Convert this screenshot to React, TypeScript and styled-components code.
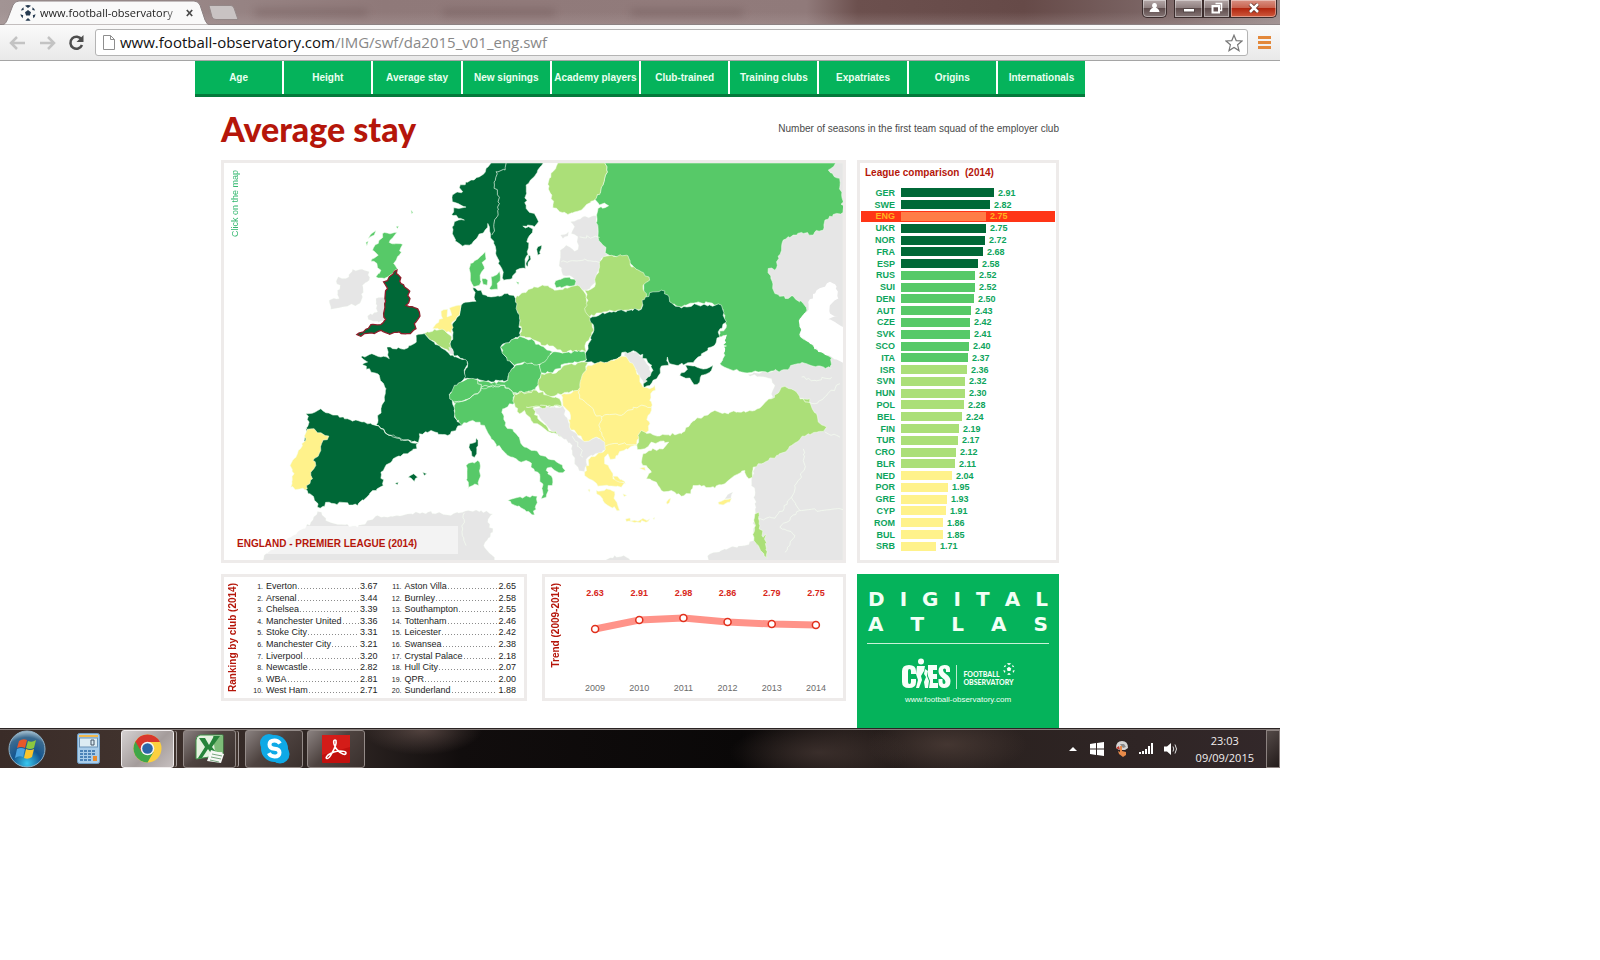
import React from "react";
import styled, { createGlobalStyle } from "styled-components";

const sans = `"Liberation Sans", Arial, sans-serif`;
const ui = `"Open Sans", "Segoe UI", sans-serif`;
const red = "#b5160a";
const green = "#05b35b";

const Global = createGlobalStyle`
  * { box-sizing: border-box; }
  body { margin: 0; background: #fff; font-family: ${sans}; }
  button, input { font: inherit; color: inherit; border: 0; padding: 0; margin: 0; background: none; }
  a { color: inherit; text-decoration: none; }
  svg { display: block; flex: none; }
`;

/* ---------- browser window ---------- */

const Desktop = styled.div`
  width: 80%;
  min-width: 900px;
`;

const TabStrip = styled.div`
  display: flex;
  align-items: flex-end;
  height: 25px;
  border-bottom: 1px solid #8d8283;
  background:
    linear-gradient(to bottom, rgba(255, 255, 255, 0) 50%, rgba(190, 175, 175, 0.25)),
    linear-gradient(to right, #a29494, #8f7979 30%, #917b7b 52%, #907a7a 63%, #6c504e 67%, #664a48 80%, #806b6b 92%, #9a8c8c);
`;

const ActiveTab = styled.div`
  position: relative;
  display: flex;
  align-items: center;
  width: 208px;
  height: 24px;
  padding: 2px 15px 0 20px;
  font-family: ${ui};
  font-size: 11px;
  color: #222;
`;

const TabShape = styled.svg`
  position: absolute;
  inset: 0;
  z-index: 0;
`;

const TabLabel = styled.span`
  position: relative;
  flex: 1;
  margin-left: 4px;
  white-space: nowrap;
  line-height: 16px;
  -webkit-mask-image: linear-gradient(to right, #000 90%, rgba(0, 0, 0, 0.3));
  mask-image: linear-gradient(to right, #000 90%, rgba(0, 0, 0, 0.3));
`;

const TabIcon = styled.svg`
  position: relative;
`;

const TabClose = styled.button`
  position: relative;
  margin: 0 0 0 8px;
`;

const NewTab = styled.button`
  align-self: center;
`;

const GhostTabs = styled.div`
  display: flex;
  align-self: stretch;
  align-items: center;
  flex: 1;
  gap: 76px;
  padding-left: 16px;
  overflow: hidden;
`;

const Ghost = styled.span`
  width: 112px;
  height: 5px;
  background: #6e5656;
  opacity: 0.6;
  filter: blur(4px);
`;

const WindowButtons = styled.div`
  display: flex;
  align-self: flex-start;
  margin-right: 3px;
`;

const WindowButton = styled.button<{ $w: number; $kind?: "close" | "user" }>`
  display: flex;
  align-items: center;
  justify-content: center;
  width: ${(p) => p.$w}px;
  height: 18px;
  padding-bottom: 2px;
  margin-right: ${(p) => (p.$kind === "user" ? 7 : 0)}px;
  border: 1px solid #3b2c2c;
  border-top: 0;
  border-radius: ${(p) => (p.$kind === "close" ? "0 0 5px 0" : p.$kind === "user" ? "0 0 5px 5px" : "0")};
  box-shadow: inset 0 0 0 1px rgba(255, 255, 255, 0.4);
  background: ${(p) =>
    p.$kind === "close"
      ? "linear-gradient(#d99183, #c96450 45%, #b2260f 50%, #cf5a3d)"
      : "linear-gradient(#b5a8a8, #8f8080 45%, #5f4d4d 50%, #857575)"};
`;

const Toolbar = styled.div`
  display: flex;
  align-items: center;
  height: 36px;
  padding: 0 9px;
  border-bottom: 1px solid #a5a5a5;
  background: linear-gradient(#fafafa, #e9e9e9);
`;

const ToolButton = styled.button<{ $gap: number }>`
  margin-right: ${(p) => p.$gap}px;
`;

const Omnibox = styled.div`
  position: relative;
  display: flex;
  align-items: center;
  flex: 1;
  height: 27px;
  margin-right: 10px;
  padding: 0 4px 0 7px;
  border: 1px solid #b4b4b4;
  border-radius: 3px;
  background: #fff;
  font-family: ${ui};
  font-size: 15px;
  line-height: 24px;
`;

const Address = styled.a`
  flex: 1;
  margin-left: 5px;
  padding-bottom: 2px;
  color: #888;
  b { font-weight: 400; color: #111; }
`;

/* ---------- page ---------- */

const Site = styled.main`
  background: #fff;
`;

const Nav = styled.nav`
  display: flex;
  gap: 2px;
  width: 70%;
  max-width: 890px;
  min-width: 860px;
  height: 36px;
  margin: 0 auto;
  border-bottom: 3px solid #047a3c;
`;

const NavLink = styled.a`
  flex: 1;
  display: flex;
  align-items: center;
  justify-content: center;
  background: ${green};
  color: #eafff0;
  font-size: 10px;
  line-height: 12px;
  font-weight: 700;
  white-space: nowrap;
`;

const Content = styled.div`
  width: 66%;
  max-width: 838px;
  min-width: 820px;
  margin: 0 auto;
`;

const Heading = styled.header`
  display: flex;
  align-items: center;
  justify-content: space-between;
  height: 63px;
`;

const Title = styled.h1`
  margin: 0;
  font-family: Lato, ${sans};
  font-size: 34px;
  line-height: 40px;
  font-weight: 900;
  color: ${red};
`;

const Subtitle = styled.p`
  margin: 0;
  font-size: 10px;
  line-height: 12px;
  color: #4a4a4a;
`;

const Grid = styled.div`
  display: grid;
  grid-template-columns: 625fr 202fr;
  gap: 11px;
`;

const Panel = styled.section`
  position: relative;
  border: 3px solid #eeebea;
  background: #fff;
`;

const SideLabel = styled.h2<{ $strong?: boolean }>`
  align-self: flex-start;
  margin: ${(p) => (p.$strong ? "3px 0 0" : "0")};
  writing-mode: vertical-rl;
  transform: rotate(180deg);
  white-space: nowrap;
  font-size: ${(p) => (p.$strong ? 10 : 9)}px;
  line-height: 12px;
  font-weight: ${(p) => (p.$strong ? 700 : 400)};
  color: ${(p) => (p.$strong ? red : "#35b870")};
`;

const MapHint = styled.div`
  position: absolute;
  top: 7px;
  left: 5px;
`;

const MapCaption = styled.div`
  position: absolute;
  left: 4px;
  bottom: 6px;
  width: 230px;
  padding: 12px 9px 4px;
  background: rgba(255, 255, 255, 0.5);
  font-size: 10px;
  line-height: 12px;
  font-weight: 700;
  color: ${red};
`;

const MapSvg = styled.svg`
  width: 100%;
  height: auto;
`;

const LeaguePanel = styled(Panel)`
  display: flex;
  flex-direction: column;
  padding: 4px 1px 8px;
`;

const PanelTitle = styled.h2`
  margin: 0 0 8px 4px;
  font-size: 10px;
  line-height: 12px;
  font-weight: 700;
  color: ${red};
  white-space: pre;
`;

const LeagueTable = styled.table`
  display: flex;
  flex: 1;
  tbody { display: flex; flex: 1; flex-direction: column; }
`;

const LeagueRow = styled.tr<{ $on: boolean }>`
  display: flex;
  flex: 1;
  align-items: center;
  background: ${(p) => (p.$on ? "#ff3516" : "none")};
  color: ${(p) => (p.$on ? "#ffb31f" : "#0da45c")};
  font-size: 9px;
  line-height: 10px;
  font-weight: 700;
  th { width: 34px; padding: 0; text-align: right; }
  td { display: flex; align-items: center; gap: 4px; padding: 0 0 0 6px; }
`;

const Bar = styled.span<{ $tone: string }>`
  height: 9px;
  background: ${(p) => p.$tone};
`;

const LowerRow = styled.div`
  display: grid;
  grid-template-columns: 306fr 304fr;
  gap: 15px;
  height: 127px;
`;

const RankingPanel = styled(Panel)`
  display: flex;
  padding: 3px 8px 3px 3px;
`;

const RankingTable = styled.table`
  display: flex;
  flex: 1;
  margin-left: 12px;
  tbody { display: flex; flex: 1; flex-direction: column; justify-content: space-between; }
`;

const RankingRow = styled.tr`
  display: flex;
  align-items: baseline;
  height: 11px;
  font-size: 9px;
  line-height: 11px;
  color: #1d1d1d;
  td { padding: 0; white-space: nowrap; }
  td:first-child { width: 12px; margin-right: 3px; font-size: 7px; text-align: right; }
`;

const Leader = styled.td`
  flex: 1;
  height: 9px;
  margin: 0 1px;
  background: repeating-linear-gradient(to right, #8b8b8b 0 1px, transparent 1px 3px) left bottom / 100% 1px no-repeat;
`;

const TrendPanel = styled(Panel)`
  display: flex;
  padding: 3px 5px 4px;
`;

const TrendChart = styled.div`
  flex: 1;
  display: flex;
  flex-direction: column;
  justify-content: space-between;
  padding-left: 11px;
`;

const TrendScale = styled.div<{ $strong?: boolean }>`
  display: flex;
  padding-top: ${(p) => (p.$strong ? 8 : 0)}px;
  font-size: 9px;
  line-height: 11px;
  font-weight: ${(p) => (p.$strong ? 700 : 400)};
  color: ${(p) => (p.$strong ? "#d8261a" : "#6b6b6b")};
  span { flex: 1; text-align: center; }
`;

const TrendLine = styled.svg`
  width: 100%;
  height: auto;
`;

const Brand = styled.aside`
  display: flex;
  flex-direction: column;
  height: 154px;
  padding: 13px 10px;
  background: ${green};
  color: #f2fff6;
`;

const Wordmark = styled.div`
  display: flex;
  justify-content: space-between;
  padding: 0 1px;
  font-family: "DejaVu Sans", sans-serif;
  font-size: 20px;
  line-height: 25px;
  font-weight: 700;
`;

const BrandRule = styled.hr`
  width: 100%;
  height: 1px;
  margin: 6px 0 14px;
  border: 0;
  background: #c9f2d8;
`;

const BrandRow = styled.div`
  display: flex;
  align-items: flex-end;
  justify-content: center;
  gap: 5px;
`;

const Cies = styled.strong`
  position: relative;
  display: flex;
  align-items: flex-end;
`;

const Observatory = styled.div`
  position: relative;
  padding: 5px 0 3px 6px;
  border-left: 1px solid #bdebcf;
  font-family: Lato, ${sans};
  font-size: 7px;
  line-height: 8px;
  font-weight: 900;
`;

const ObservatoryBall = styled.svg`
  position: absolute;
  right: -1px;
  top: -2px;
`;

const SiteLink = styled.a`
  margin-top: 5px;
  text-align: center;
  font-size: 8px;
  line-height: 12px;
`;

/* ---------- taskbar ---------- */

const Taskbar = styled.footer`
  display: flex;
  align-items: center;
  height: 40px;
  border-top: 1px solid #2b2424;
  box-shadow: inset 0 1px 0 #857c7a;
  background:
    radial-gradient(ellipse 60px 26px at 33% 0, rgba(120, 98, 92, 0.6), transparent),
    radial-gradient(ellipse 90px 30px at 64% 60%, rgba(70, 56, 52, 0.7), transparent),
    radial-gradient(ellipse 80px 30px at 74% 40%, rgba(80, 64, 58, 0.7), transparent),
    linear-gradient(to right, #3a2c28, #40322d 10%, #2a2220 28%, #110d0d 36%, #0a0808 58%, #231b19 66%, #2b2220 78%, #33282a 100%);
`;

const StartButton = styled.button`
  margin: 0 31px 0 8px;
`;

const PinnedButton = styled.button`
  margin-right: 21px;
`;

const TaskButton = styled.button<{ $active?: boolean; $stack?: boolean; $w: number }>`
  display: flex;
  align-items: center;
  justify-content: center;
  width: ${(p) => p.$w}px;
  height: 38px;
  margin-right: ${(p) => (p.$stack ? 9 : 4)}px;
  border: 1px solid ${(p) => (p.$active ? "#f0ecec" : "#948b88")};
  border-radius: 3px;
  box-shadow: ${(p) => (p.$stack ? "3px 0 0 -1px #40342f, 4px 0 0 -1px #a69d9b" : "none")};
  background: ${(p) =>
    p.$active
      ? "linear-gradient(135deg, #d5d1d1, #a49c9b 55%, #c6bfbf)"
      : "linear-gradient(135deg, #8a8180, #4e4340 45%, #3a302d)"};
`;

const Tray = styled.div`
  display: flex;
  align-items: center;
  flex: 1;
  justify-content: flex-end;
  gap: 10px;
`;

const Clock = styled.time`
  margin: 0 12px 0 7px;
  padding-top: 1px;
  font-family: ${ui};
  font-size: 11px;
  line-height: 17px;
  color: #f1eeee;
  text-align: center;
`;

const ShowDesktop = styled.button`
  width: 14px;
  height: 38px;
  border: 1px solid #8c8280;
  background: linear-gradient(135deg, #544a48, #231b1a);
`;

/* ---------- map geometry ---------- */

/* Small repeatable displacement that breaks straight edges into a coastline. */
const jitter = (x: number, y: number) => {
  const s = Math.sin(x * 12.9898 + y * 78.233) * 43758.5453;
  return (s - Math.floor(s) - 0.5) * 9;
};

const outline = (points: string, closed = true) => {
  const pts = points.trim().split(/\s+/).map((p) => p.split(",").map(Number));
  const out: string[] = [];
  const count = closed ? pts.length : pts.length - 1;
  for (let i = 0; i < count; i++) {
    const [x1, y1] = pts[i];
    const [x2, y2] = pts[(i + 1) % pts.length];
    out.push(`${x1},${y1}`);
    const frame = (y1 === 24 && y2 === 24) || (x1 >= 1884 && x2 >= 1884) || (y1 >= 1214 && y2 >= 1214);
    const steps = frame ? 1 : Math.floor(Math.hypot(x2 - x1, y2 - y1) / 8);
    for (let k = 1; k < steps; k++) {
      const x = x1 + ((x2 - x1) * k) / steps;
      const y = y1 + ((y2 - y1) * k) / steps;
      out.push(`${(x + jitter(x, y)).toFixed(1)},${(y + jitter(y, x)).toFixed(1)}`);
    }
  }
  if (!closed) out.push(pts[pts.length - 1].join(","));
  return `M${out.join("L")}${closed ? "Z" : ""}`;
};

const tone = { dark: "#006837", mid: "#57c968", light: "#abdf78", pale: "#fff28b", none: "#e6e6e6" };

type Land = [keyof typeof tone, string];

const lands: Land[] = [
  // Russia's neighbours, Caucasus and Middle East
  ["none", "1780,24 1884,24 1884,1220 1475,1220 1485,1195 1530,1180 1590,1170 1617,1155 1620,1020 1610,975 1620,930 1680,690 1670,670 1600,658 1700,640 1780,610 1660,430 1640,340 1700,240"],
  // North Africa
  ["none", "140,1220 150,1200 230,1145 290,1100 310,1068 322,1070 335,1095 365,1105 430,1115 490,1080 520,1085 580,1075 640,1070 700,1078 745,1070 800,1065 835,1075 820,1100 835,1130 808,1170 840,1205 840,1220"],
  ["none", "1160,1220 1200,1200 1235,1205 1250,1220"],
  // Ireland and Wales
  ["none", "372,365 395,370 415,342 450,345 465,350 465,375 445,390 445,425 430,448 385,455 350,462 345,435 375,430 370,405 378,390 366,378"],
  ["none", "485,430 512,430 512,500 470,495 460,482 490,470"],
  // Baltic states
  ["none", "1068,200 1105,185 1145,182 1150,230 1165,270 1180,298 1160,310 1155,340 1145,380 1115,405 1080,390 1078,370 1045,360 1035,320 1037,285 1055,270 1080,288 1092,270 1090,245 1070,235 1080,215"],
  ["none", "1038,240 1062,230 1060,243 1045,250"],
  // Balkans without data
  ["none", "955,758 1045,752 1065,815 1090,845 1110,858 1145,845 1172,858 1175,882 1120,905 1110,955 1080,925 1073,870 1030,838 1000,815 975,785"],
  // Moldova
  ["none", "1230,590 1265,590 1285,605 1305,635 1312,660 1290,692 1270,655 1240,615"],
  ["mid", "1170,24 1862,24 1840,45 1858,65 1874,70 1880,120 1884,172 1865,175 1830,195 1825,225 1800,230 1795,240 1760,232 1735,240 1705,255 1700,285 1685,320 1680,345 1660,340 1668,370 1680,415 1720,430 1730,422 1765,445 1776,465 1760,490 1757,545 1790,565 1820,590 1850,608 1848,640 1815,632 1755,625 1700,645 1630,650 1580,650 1535,638 1515,622 1530,600 1520,585 1535,572 1505,575 1535,540 1508,545 1535,510 1530,480 1515,450 1450,440 1400,455 1350,440 1290,430 1280,365 1240,310 1180,298 1165,270 1150,245 1146,180 1150,160 1182,152 1150,143 1140,132 1165,90 1176,45"],
  ["mid", "1020,385 1048,368 1080,372 1080,392 1025,398"],
  ["light", "1030,24 1170,24 1176,45 1165,90 1145,130 1105,160 1060,178 1015,158 1012,120 1000,88 1015,50"],
  ["dark", "830,24 986,24 970,45 948,75 935,90 935,160 945,172 965,185 972,200 960,215 925,213 955,222 940,250 938,290 933,340 905,345 893,370 868,375 862,340 845,300 838,265 828,235 820,205 812,225 790,245 765,270 745,273 722,258 714,235 720,200 750,195 712,178 718,158 755,156 714,140 714,120 745,110 735,98 770,75 800,62 815,40"],
  ["dark", "970,275 982,270 978,295 970,300"],
  ["dark", "942,300 947,302 940,335 935,330"],
  // Denmark
  ["mid", "768,325 790,312 812,290 815,312 803,322 810,340 797,360 795,390 778,395 768,370"],
  ["mid", "803,370 820,375 818,390 806,387"],
  ["mid", "830,365 848,358 855,348 858,365 848,385 850,402 825,400 832,380"],
  ["mid", "905,380 914,382 911,388"],
  ["light", "903,430 930,412 958,395 990,392 1020,405 1095,393 1115,425 1118,460 1130,490 1138,525 1115,560 1115,590 1085,585 1045,592 1015,572 980,570 960,555 918,543 915,490 903,455"],
  ["light", "1180,302 1240,302 1250,335 1280,350 1305,375 1285,390 1295,425 1280,460 1230,465 1165,470 1125,485 1110,460 1120,435 1110,405 1140,395 1145,360 1155,335 1160,315"],
  ["dark", "1125,490 1165,472 1280,462 1282,435 1315,410 1340,405 1360,420 1365,440 1400,458 1445,448 1520,450 1525,480 1535,500 1510,530 1515,545 1490,575 1450,605 1435,622 1385,630 1365,625 1358,605 1362,630 1340,632 1332,660 1315,675 1287,698 1300,665 1315,645 1295,610 1265,590 1232,590 1210,608 1180,625 1140,625 1110,620 1120,570 1138,525"],
  ["dark", "1395,660 1418,642 1412,630 1440,632 1475,640 1495,630 1490,645 1460,660 1455,680 1438,688 1425,668"],
  // Germany, Low Countries, France
  ["dark", "775,398 800,405 805,418 830,425 880,415 903,430 905,460 915,490 918,540 860,572 870,600 900,632 880,675 830,680 790,670 750,670 758,618 720,602 708,575 715,540 712,510 735,480 740,450 765,440 785,438"],
  ["pale", "655,520 685,490 680,468 700,462 698,485 712,480 705,458 740,450 735,480 714,500 712,535 690,525"],
  ["light", "630,535 660,522 690,525 712,545 705,590 680,575 650,555"],
  ["none", "703,575 714,580 717,598 704,594"],
  ["dark", "605,540 630,535 650,555 680,577 720,605 758,618 748,672 705,718 722,760 720,785 742,810 700,840 650,825 615,835 612,862 570,855 530,840 485,810 500,760 510,725 515,700 495,660 445,628 460,620 440,605 480,598 500,605 525,610 518,575 535,580 570,582 600,565"],
  // Iberia
  ["dark", "275,775 320,760 335,772 400,790 485,810 530,840 572,855 612,862 608,880 545,905 500,950 507,990 475,1005 430,1050 345,1040 318,1058 300,1030 270,1000 275,820 285,800"],
  ["pale", "275,817 300,820 310,832 344,842 322,865 315,895 297,915 305,930 290,950 295,970 272,1003 230,995 240,955 228,930 250,895 275,850"],
  ["dark", "582,965 598,955 610,965 600,978"],
  ["dark", "625,950 637,955 630,960"],
  ["dark", "542,983 552,980 550,988"],
  // Britain
  ["mid", "485,365 500,345 488,325 470,318 492,300 475,285 492,265 510,232 548,232 525,262 565,268 555,300 538,325 550,342 530,358 510,370"],
  ["mid", "468,240 485,226 480,240 462,250"],
  ["mid", "455,262 462,258 458,272"],
  ["mid", "545,215 553,213 550,220"],
  ["mid", "590,165 596,172 592,176"],
  // Central Europe and Italy
  ["mid", "705,718 720,690 760,670 790,674 830,684 880,675 892,640 930,620 975,630 980,660 970,690 955,710 900,715 860,698 800,705 790,725 740,740 722,745"],
  ["mid", "858,575 915,543 930,548 960,558 980,572 1015,590 990,622 975,627 930,620 900,630 870,600"],
  ["mid", "975,630 990,620 1015,590 1050,592 1110,588 1115,615 1050,625 1015,652 980,652"],
  ["mid", "720,760 725,740 742,738 790,715 800,698 860,690 895,710 902,742 865,760 872,810 905,835 930,875 960,885 980,900 1035,925 1052,945 1045,952 1010,935 995,945 1015,980 1000,1000 995,1025 980,1030 985,990 970,950 935,915 920,920 880,900 830,850 810,810 775,795 742,810 722,785"],
  ["mid", "880,1035 900,1028 968,1022 960,1078 935,1068"],
  ["mid", "755,930 790,915 797,940 793,990 775,990 760,1000 758,960"],
  ["dark", "785,848 791,870 787,895 780,906 768,885 766,865 784,860"],
  // Hungary, Slovenia, Croatia
  ["light", "970,685 980,655 1015,655 1050,630 1120,622 1115,645 1095,700 1040,718 1000,722 975,705"],
  ["light", "895,715 945,708 965,705 1000,720 1035,730 1042,752 955,758 970,790 1000,818 1040,845 990,820 950,795 930,765 915,775 900,745"],
  // Romania, Serbia, Bulgaria, Greece
  ["pale", "1040,718 1090,705 1100,670 1120,630 1170,622 1220,603 1240,612 1275,660 1285,695 1305,700 1320,690 1322,705 1308,715 1310,765 1300,780 1302,825 1275,835 1268,872 1235,880 1215,888 1202,910 1187,912 1180,895 1170,905 1170,925 1195,955 1195,970 1230,980 1220,995 1150,992 1135,975 1110,960 1125,910 1172,882 1170,860 1145,845 1110,858 1090,840 1065,815 1065,770 1045,750"],
  ["pale", "1145,1005 1175,1000 1200,1008 1198,1028 1208,1045 1215,1065 1180,1050 1165,1035"],
  ["pale", "1233,1090 1260,1094 1305,1090 1300,1098 1260,1101 1235,1098"],
  ["pale", "1195,962 1230,978 1232,985 1200,972"],
  ["pale", "1355,1040 1368,1028 1364,1042 1357,1046"],
  ["pale", "1275,938 1290,935 1292,945"],
  ["pale", "1120,1003 1126,1001 1125,1010"],
  ["pale", "1225,1015 1236,1020 1228,1023"],
  ["pale", "1315,1088 1320,1086 1318,1092"],
  // Turkey, Cyprus, Israel
  ["light", "1270,840 1280,825 1315,838 1350,838 1400,835 1440,795 1500,765 1530,772 1620,765 1670,730 1710,693 1745,710 1755,730 1785,730 1790,755 1805,775 1810,800 1835,815 1825,828 1780,835 1730,870 1690,900 1630,925 1615,935 1613,965 1602,970 1590,945 1560,960 1530,985 1500,998 1435,990 1428,1015 1400,1022 1370,1005 1340,1005 1325,980 1295,970 1310,950 1280,920 1285,895 1310,885 1350,875 1362,860 1310,860 1290,880 1268,882"],
  ["pale", "1510,1040 1530,1032 1550,1028 1545,1040 1525,1048 1512,1046"],
  ["none", "1530,1030 1555,1010 1548,1028"],
  ["light", "1620,1075 1632,1070 1635,1110 1645,1145 1652,1135 1656,1208 1635,1180 1617,1155"],
];

const seas = [
  // Caspian
  "1845,380 1865,395 1870,430 1850,445 1845,475 1870,482 1840,492 1860,500 1884,515 1884,622 1850,605 1810,590 1780,560 1757,545 1755,490 1775,470 1780,440 1805,405 1830,395",
  // Sea of Azov
  "1535,538 1530,555 1530,590 1520,600 1520,622 1490,630 1440,622 1462,602",
];

const borders = [
  "875,24 872,45 845,50 840,90 855,145 848,185 838,215 832,240",
  "485,810 530,840 570,853 612,862",
  "1095,245 1155,247",
  "1040,320 1110,312 1155,322",
  "1095,705 1095,730 1130,755 1145,782 1220,780 1275,752 1310,756",
  "1160,785 1155,825 1170,855",
  "1172,872 1230,862 1268,868",
  "720,738 742,738 790,715 800,696 860,690 895,710",
  "790,674 800,696",
  "895,712 940,712 965,703",
  "935,755 965,752 1040,752",
  "1830,830 1875,845",
  "1765,880 1770,930 1730,1025 1755,1065 1884,1062",
  "1630,1090 1680,1088 1730,1025",
  "1755,1065 1695,1115 1740,1140 1710,1190",
  "1755,730 1800,745 1835,720 1875,685",
  "1760,665 1800,675 1850,665",
  "1073,842 1090,860 1105,905",
  "750,1072 745,1120 755,1170",
];

const england =
  "548,345 560,385 580,402 587,430 575,450 600,457 615,470 612,490 600,505 605,520 588,535 555,530 520,534 500,525 480,535 450,535 440,543 428,538 455,522 470,508 500,508 514,492 508,475 512,430 520,400 508,380 525,365";

const EuropeMap = () => (
  <MapSvg viewBox="30 24 1854 1190" role="img" aria-label="Map of Europe by league">
    {lands.map(([t, points], i) => (
      <path key={i} d={outline(points)} fill={tone[t]} stroke="#f4fff0" strokeWidth={t === "none" ? 1 : 2} strokeOpacity={0.8} />
    ))}
    {seas.map((points, i) => (
      <path key={i} d={outline(points)} fill="#fff" />
    ))}
    {borders.map((points, i) => (
      <path key={i} d={outline(points, false)} fill="none" stroke="#f6fff2" strokeWidth={2} />
    ))}
    <path d={outline(england)} fill={tone.dark} stroke="#8c1f2b" strokeWidth={4} />
  </MapSvg>
);

/* ---------- data ---------- */

const sections = ["Age", "Height", "Average stay", "New signings", "Academy players", "Club-trained", "Training clubs", "Expatriates", "Origins", "Internationals"];

const leagues: [string, number][] = [
  ["GER", 2.91], ["SWE", 2.82], ["ENG", 2.75], ["UKR", 2.75], ["NOR", 2.72], ["FRA", 2.68], ["ESP", 2.58],
  ["RUS", 2.52], ["SUI", 2.52], ["DEN", 2.5], ["AUT", 2.43], ["CZE", 2.42], ["SVK", 2.41], ["SCO", 2.4], ["ITA", 2.37],
  ["ISR", 2.36], ["SVN", 2.32], ["HUN", 2.3], ["POL", 2.28], ["BEL", 2.24], ["FIN", 2.19], ["TUR", 2.17], ["CRO", 2.12], ["BLR", 2.11],
  ["NED", 2.04], ["POR", 1.95], ["GRE", 1.93], ["CYP", 1.91], ["ROM", 1.86], ["BUL", 1.85], ["SRB", 1.71],
];

const barTone = (code: string, v: number) =>
  code === "ENG" ? "#ff7d47" : v > 2.55 ? tone.dark : v > 2.36 ? tone.mid : v > 2.1 ? tone.light : tone.pale;

const barWidth = (v: number) => Math.round((v - 0.985) * 48.3);

const clubs: [string, string][] = [
  ["Everton", "3.67"], ["Arsenal", "3.44"], ["Chelsea", "3.39"], ["Manchester United", "3.36"], ["Stoke City", "3.31"],
  ["Manchester City", "3.21"], ["Liverpool", "3.20"], ["Newcastle", "2.82"], ["WBA", "2.81"], ["West Ham", "2.71"],
  ["Aston Villa", "2.65"], ["Burnley", "2.58"], ["Southampton", "2.55"], ["Tottenham", "2.46"], ["Leicester", "2.42"],
  ["Swansea", "2.38"], ["Crystal Palace", "2.18"], ["Hull City", "2.07"], ["QPR", "2.00"], ["Sunderland", "1.88"],
];

const trend: [string, string, number][] = [
  ["2009", "2.63", 18], ["2010", "2.91", 9], ["2011", "2.98", 7], ["2012", "2.86", 11], ["2013", "2.79", 13], ["2014", "2.75", 14],
];

const trendX = (i: number) => 22 + i * 44;

/* ---------- drawings ---------- */

const Ball = ({ color, size }: { color: string; size: number }) => (
  <g fill={color} transform={`scale(${size / 16})`}>
    <path d="M8 5l3 2.200-1.100 3.400H6.100L5 7.200z" />
    <path d="M5 .8Q8-.6 11 .8L8 3zM12.500 2.200q2 1.300 2.600 3.400l-2.800-.6zM15.600 9.200q-.5 2.600-2.200 4l-.6-3zM10.600 15.400q-2.600.9-5.200 0L8 13zM2.600 13.200Q.8 11.600.4 9.200l2.800 1zM.9 5.600q.7-2.200 2.600-3.400l.2 2.800z" />
  </g>
);

const RankList = ({ from, to }: { from: number; to: number }) => (
  <RankingTable>
    <tbody>
      {clubs.slice(from, to).map(([name, value], i) => (
        <RankingRow key={name}>
          <td>{from + i + 1}.</td>
          <td>{name}</td>
          <Leader />
          <td>{value}</td>
        </RankingRow>
      ))}
    </tbody>
  </RankingTable>
);

const Browser = () => (
  <header>
    <TabStrip>
      <ActiveTab>
        <TabShape width="210" height="25" viewBox="0 0 210 25">
          <path d="M0 25C5 25 6 23 8 18L13 5Q15 1 19 1H194Q198 1 200 5L205 20Q207 25 210 25Z" fill="#f9f9f9" stroke="#8d8283" />
        </TabShape>
        <TabIcon width="16" height="16" viewBox="0 0 16 16"><Ball color="#24394f" size={16} /></TabIcon>
        <TabLabel>www.football-observatory</TabLabel>
        <TabClose aria-label="Close tab">
          <svg width="7" height="8" viewBox="0 0 7 8"><path d="M.8 1l5.400 6M6.200 1L.8 7" stroke="#4a4a4a" strokeWidth="1.700" /></svg>
        </TabClose>
      </ActiveTab>
      <NewTab aria-label="New tab">
        <svg width="31" height="15" viewBox="0 0 31 15"><path d="M1 .5H23Q25 .5 26 3L30 14.500H8Q5 14.500 4 12Z" fill="#c9c3c3" stroke="#948888" /></svg>
      </NewTab>
      <GhostTabs aria-hidden="true"><Ghost /><Ghost /><Ghost /></GhostTabs>
      <WindowButtons>
        <WindowButton $w={25} $kind="user" aria-label="User">
          <svg width="11" height="10" viewBox="0 0 11 10"><path d="M5.500 0a2.300 2.500 0 0 1 1.200 4.700Q10 5.500 10.500 9H.5Q1 5.500 4.300 4.700A2.300 2.500 0 0 1 5.500 0z" fill="#fff" /></svg>
        </WindowButton>
        <WindowButton $w={29} aria-label="Minimise">
          <svg width="12" height="10" viewBox="0 0 12 10"><rect x=".5" y="5.500" width="11" height="3.500" fill="#fff" stroke="#554848" /></svg>
        </WindowButton>
        <WindowButton $w={27} aria-label="Restore">
          <svg width="12" height="12" viewBox="0 0 12 12" fill="none"><path d="M4.500 1.500h6v7h-2" stroke="#fff" strokeWidth="1.500" /><rect x="1.500" y="4" width="6.500" height="6.500" stroke="#fff" strokeWidth="2" /></svg>
        </WindowButton>
        <WindowButton $w={47} $kind="close" aria-label="Close">
          <svg width="12" height="10" viewBox="0 0 12 10"><path d="M2 1l8 8M10 1L2 9" stroke="#5a2a22" strokeWidth="4" /><path d="M2 1l8 8M10 1L2 9" stroke="#fff" strokeWidth="2.500" /></svg>
        </WindowButton>
      </WindowButtons>
    </TabStrip>
    <Toolbar>
      <ToolButton $gap={13} aria-label="Back">
        <svg width="17" height="14" viewBox="0 0 17 14" fill="none" stroke="#c3c3c3" strokeWidth="2.500"><path d="M8 1L2 7l6 6M2 7h14" /></svg>
      </ToolButton>
      <ToolButton $gap={12} aria-label="Forward">
        <svg width="17" height="14" viewBox="0 0 17 14" fill="none" stroke="#c3c3c3" strokeWidth="2.500"><path d="M9 1l6 6-6 6M15 7H1" /></svg>
      </ToolButton>
      <ToolButton $gap={10} aria-label="Reload">
        <svg width="17" height="16" viewBox="0 0 17 16"><path d="M13.500 4.500A6 6 0 1 0 14 10" fill="none" stroke="#4d4d4d" strokeWidth="2.500" /><path d="M15.500 0v7h-7z" fill="#4d4d4d" /></svg>
      </ToolButton>
      <Omnibox>
        <svg width="12" height="15" viewBox="0 0 12 15" fill="#fff" stroke="#8e8e8e"><path d="M.5.500h7l4 4v10H.5zM7.500.500v4h4" /></svg>
        <Address href="#address"><b>www.football-observatory.com</b>/IMG/swf/da2015_v01_eng.swf</Address>
        <button aria-label="Bookmark">
          <svg width="18" height="18" viewBox="0 0 18 18"><path d="M9 1.200l2.200 5.400 5.800.4-4.400 3.800 1.400 5.800L9 13.500l-5 3.100 1.400-5.800L1 7l5.800-.4z" fill="#fff" stroke="#777" strokeWidth="1.200" /></svg>
        </button>
      </Omnibox>
      <button aria-label="Menu">
        <svg width="13" height="13" viewBox="0 0 13 13" fill="#e3883a"><path d="M0 0h13v3H0zM0 5h13v3H0zM0 10h13v3H0z" /></svg>
      </button>
    </Toolbar>
  </header>
);

const CiesLogo = () => (
  <Cies aria-label="CIES">
    <svg width="49" height="31" viewBox="0 0 49 31" fill="#f7fff9">
      <path d="M14 16h-5v-3q0-2-1.500-2T6 13v11q0 2 1.500 2T9 24v-3h5v3q0 6-7 6t-7-6V13q0-6 7-6t7 6z" />
      <ellipse cx="19" cy="3.500" rx="3" ry="3" />
      <path d="M15 8h8l-1 5-3 5 1 4-3 8h-3l2-8-2-6z" />
      <path d="M23 11l3 2-1 5 2 5-1 7h-3l-1-6 2-5-2-3z" />
      <path d="M26 7h9v5h-4v4h4v5h-4v4h5v5h-9l1-7-2-5z" />
      <path d="M48 14h-4v-2q0-1.500-1.500-1.500T41 12q0 2 3 4 4.500 3 4.500 7 0 7-6 7t-6-6v-3h4v3q0 2 1.500 2t1.500-2q0-2-3-4-4-3-4-7 0-6 6-6t5.500 5z" />
    </svg>
  </Cies>
);

const TaskbarView = () => (
  <Taskbar>
    <StartButton aria-label="Start">
      <svg width="38" height="38" viewBox="0 0 38 38">
        <defs>
          <radialGradient id="orb" cx=".5" cy=".9" r=".9"><stop offset="0" stopColor="#38c8f0" /><stop offset=".45" stopColor="#15568f" /><stop offset=".8" stopColor="#3c6b90" /><stop offset="1" stopColor="#a9c3d3" /></radialGradient>
        </defs>
        <circle cx="19" cy="19" r="18" fill="url(#orb)" stroke="#8fb2c8" />
        <path d="M11 11q4-3 8-1l-2 8q-4-2-8 0z" fill="#e8582a" />
        <path d="M20 11q4 2 8-1l-2 8q-4 2-8 0z" fill="#8cc63f" />
        <path d="M9 19q4-2 8 0l-2 8q-4-2-8 1z" fill="#4aa3e0" />
        <path d="M18 19q4 2 8 0l-2 8q-4 3-8 1z" fill="#fbc52c" />
      </svg>
    </StartButton>
    <PinnedButton aria-label="Calculator">
      <svg width="23" height="31" viewBox="0 0 23 31">
        <rect x=".5" y=".5" width="22" height="30" rx="2" fill="#a9cdea" stroke="#6e9cc4" />
        <path d="M2 2h19v2H2z" fill="#f1b94c" />
        <rect x="2.500" y="5" width="18" height="9" fill="#dcecf3" stroke="#6b93b5" />
        <path d="M14 7h3v5h-3z" fill="none" stroke="#456" />
        <path d="M3 17h3v2H3zm4 0h3v2H7zm4 0h3v2h-3zm4 0h3v2h-3zM3 20h3v2H3zm4 0h3v2H7zm4 0h3v2h-3zm4 0h3v2h-3zM3 23h3v2H3zm4 0h3v2H7zm4 0h3v2h-3zM3 26h3v2H3zm4 0h3v2H7zm4 0h3v2h-3z" fill="#4b83b8" />
        <path d="M16 23h4v5h-4z" fill="#e88b2e" />
      </svg>
    </PinnedButton>
    <TaskButton $w={53} $active $stack aria-label="Chrome">
      <svg width="29" height="29" viewBox="0 0 29 29">
        <circle cx="14.500" cy="14.500" r="14" fill="#fcd040" />
        <path d="M14.500 14.500L2.400 7.500A14 14 0 0 0 14.500 28.500L20.500 18z" fill="#3fa648" />
        <path d="M14.500 .5A14 14 0 0 0 2.400 7.500L8.500 18 14.500 8H27A14 14 0 0 0 14.500.5z" fill="#d8372c" />
        <circle cx="14.500" cy="14.500" r="6.800" fill="#f5f5f5" />
        <circle cx="14.500" cy="14.500" r="5.300" fill="#2c66a8" />
      </svg>
    </TaskButton>
    <TaskButton $w={53} $stack aria-label="Excel">
      <svg width="30" height="30" viewBox="0 0 30 30">
        <path d="M5 1h23v20L1 25V6q0-4 4-5z" fill="#e4f2df" stroke="#3d9147" />
        <path d="M18 2h10v16h-8z" fill="#7dbd78" />
        <path d="M4 4h6l4 7 5-9h6L17 13l7 9h-6l-5-7-6 9H3l7-11z" fill="#26843a" />
        <path d="M16 16l13 4-3 9-14-2z" fill="#f6f8f5" /><path d="M17 20l10 2M16 23l10 2M15 26l9 2" stroke="#79a780" />
      </svg>
    </TaskButton>
    <TaskButton $w={58} aria-label="Skype">
      <svg width="31" height="31" viewBox="0 0 31 31">
        <circle cx="10" cy="10" r="9" fill="#0fa9e6" /><circle cx="21" cy="21" r="9.500" fill="#0fa9e6" /><circle cx="15.500" cy="15.500" r="13.500" fill="#0fa9e6" />
        <path d="M21 10.500q-2-3-5.500-3-5 0-5 4t5 4.200q5 .5 5 3.800 0 4-5 4-4 0-5.700-3.300" fill="none" stroke="#fff" strokeWidth="4" />
      </svg>
    </TaskButton>
    <TaskButton $w={58} aria-label="Acrobat Reader">
      <svg width="28" height="28" viewBox="0 0 28 28">
        <rect width="28" height="28" rx="1" fill="#c2100e" /><path d="M0 0h28v12L0 20z" fill="#d41c18" />
        <path d="M13 5q-2 0-1 4 2 7 9 10 3 1 3-1t-6-2q-6 0-12 4-3 3-1 3.500t5-5.500q5-9 4-12 0-1-1-1z" fill="none" stroke="#fff" strokeWidth="1.600" />
      </svg>
    </TaskButton>
    <Tray>
      <svg width="8" height="4" viewBox="0 0 8 4"><path d="M4 0l4 4H0z" fill="#fff" /></svg>
      <svg width="18" height="14" viewBox="6 0 18 14" fill="#fff"><path d="M9 2l6-1v5.500H9zM16 1l7-1v6.500h-7zM9 7.500h6V13l-6-1zM16 7.500h7V14l-7-1z" /></svg>
      <svg width="14" height="16" viewBox="0 0 14 16"><path d="M1 7q0-7 6-7t6 7l-3 2H4z" fill="#d5d5d5" /><path d="M5 3h4l2 3-3 1z" fill="#8a8a8a" /><path d="M5 5h2v5l4 1v3l-3 2-4-3-1-3 2 1z" fill="#e88a49" /><path d="M1 7l3-2 1 4z" fill="#c5392b" /></svg>
      <svg width="15" height="11" viewBox="0 0 15 11" fill="#fff"><path d="M0 9h2v2H0zM3 8h2v3H3zM6 6h2v5H6zM9 3h2v8H9zM12 0h2v11h-2z" /></svg>
      <svg width="15" height="14" viewBox="0 0 15 14"><path d="M0 4.500h3L7 1v12L3 9.500H0z" fill="#fff" /><path d="M9 4.500q1.500 2.500 0 5M11 2.500q3 4.500 0 9" fill="none" stroke="#ddd" /></svg>
      <Clock dateTime="2015-09-09T23:03">23:03<br />09/09/2015</Clock>
    </Tray>
    <ShowDesktop aria-label="Show desktop" />
  </Taskbar>
);

export default function App() {
  return (
    <>
      <Global />
      <Desktop>
        <Browser />
        <Site>
          <Nav>{sections.map((s) => <NavLink key={s} href="#section">{s}</NavLink>)}</Nav>
          <Content>
            <Heading>
              <Title>Average stay</Title>
              <Subtitle>Number of seasons in the first team squad of the employer club</Subtitle>
            </Heading>
            <Grid>
              <Panel>
                <EuropeMap />
                <MapHint><SideLabel>Click on the map</SideLabel></MapHint>
                <MapCaption>ENGLAND - PREMIER LEAGUE (2014)</MapCaption>
              </Panel>
              <LeaguePanel>
                <PanelTitle>{"League comparison  (2014)"}</PanelTitle>
                <LeagueTable>
                  <tbody>
                    {leagues.map(([code, v]) => (
                      <LeagueRow key={code} $on={code === "ENG"}>
                        <th scope="row">{code}</th>
                        <td><Bar $tone={barTone(code, v)} style={{ width: barWidth(v) }} />{v.toFixed(2)}</td>
                      </LeagueRow>
                    ))}
                  </tbody>
                </LeagueTable>
              </LeaguePanel>
              <LowerRow>
                <RankingPanel>
                  <SideLabel $strong>Ranking by club (2014)</SideLabel>
                  <RankList from={0} to={10} />
                  <RankList from={10} to={20} />
                </RankingPanel>
                <TrendPanel>
                  <SideLabel $strong>Trend (2009-2014)</SideLabel>
                  <TrendChart>
                    <TrendScale $strong>{trend.map(([y, v]) => <span key={y}>{v}</span>)}</TrendScale>
                    <TrendLine viewBox="0 0 264 60">
                      <polyline points={trend.map(([, , y], i) => `${trendX(i)},${y}`).join(" ")} fill="none" stroke="#ff9389" strokeWidth="7" />
                      {trend.map(([year, , y], i) => <circle key={year} cx={trendX(i)} cy={y} r="3.500" fill="#fff" stroke="#e0301c" strokeWidth="1.500" />)}
                    </TrendLine>
                    <TrendScale>{trend.map(([y]) => <span key={y}>{y}</span>)}</TrendScale>
                  </TrendChart>
                </TrendPanel>
              </LowerRow>
              <Brand>
                <Wordmark>{[..."DIGITAL"].map((c, i) => <span key={i}>{c}</span>)}</Wordmark>
                <Wordmark>{[..."ATLAS"].map((c, i) => <span key={i}>{c}</span>)}</Wordmark>
                <BrandRule />
                <BrandRow>
                  <CiesLogo />
                  <Observatory>
                    FOOTBALL<br />OBSERVATORY
                    <ObservatoryBall width="12" height="12" viewBox="0 0 16 16"><Ball color="#f7fff9" size={16} /></ObservatoryBall>
                  </Observatory>
                </BrandRow>
                <SiteLink href="#site">www.football-observatory.com</SiteLink>
              </Brand>
            </Grid>
          </Content>
        </Site>
        <TaskbarView />
      </Desktop>
    </>
  );
}
